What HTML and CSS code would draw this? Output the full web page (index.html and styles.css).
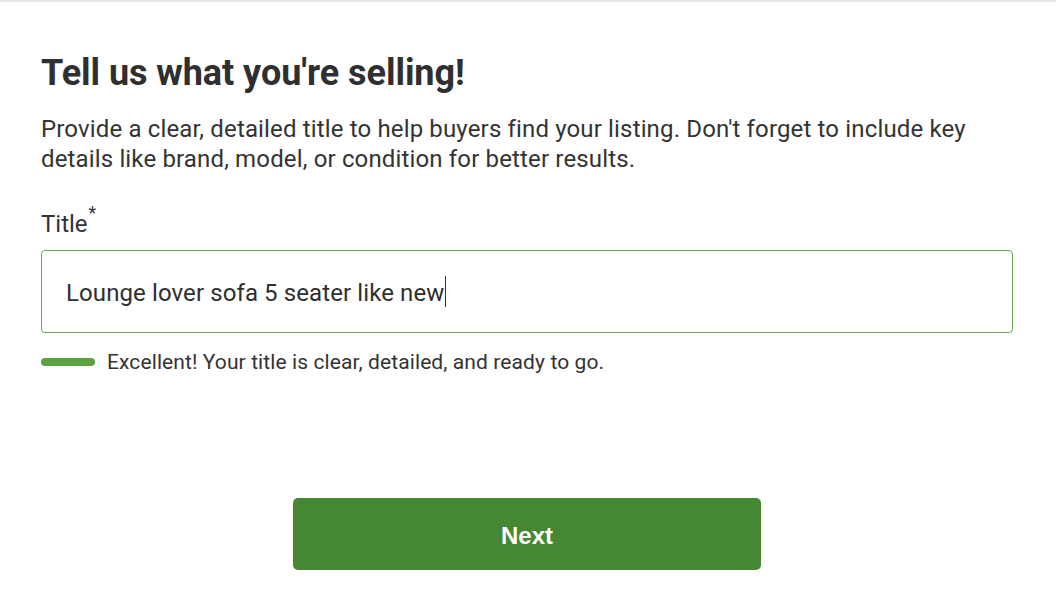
FILE: index.html
```html
<!DOCTYPE html>
<html lang="en">
<head>
<meta charset="utf-8">
<title>Tell us what you're selling</title>
<link rel="stylesheet" href="styles.css">
</head>
<body>
<div class="topline"></div>
<main class="page">
  <h1 class="heading">Tell us what you're selling!</h1>
  <p class="intro">Provide a clear, detailed title to help buyers find your listing. Don't forget to include key details like brand, model, or condition for better results.</p>
  <label class="label">Title<sup class="req">*</sup></label>
  <div class="input">
    <span class="value">Lounge lover sofa 5 seater like new</span><span class="caret"></span>
  </div>
  <div class="feedback">
    <span class="bar"></span>
    <span class="msg">Excellent! Your title is clear, detailed, and ready to go.</span>
  </div>
  <div class="actions">
    <button class="next">Next</button>
  </div>
</main>
</body>
</html>
```

FILE: styles.css
```css
* { box-sizing: border-box; }
html, body { margin: 0; padding: 0; background: #fff; }
body {
  font-family: Roboto, "Liberation Sans", sans-serif;
  color: #333;
  width: 1056px;
  height: 601px;
  overflow: hidden;
}
.topline {
  height: 2px;
  background: #e6e6e6;
}
.page {
  padding: 0 43px 0 41px;
  display: flex;
  flex-direction: column;
}
.heading {
  margin: 49px 0 0;
  font-size: 36px;
  font-weight: 700;
  line-height: 44px;
  color: #2f2f2f;
  letter-spacing: -0.05px;
}
.intro {
  margin: 19px 0 0;
  font-size: 24px;
  line-height: 30px;
  color: #333;
  letter-spacing: 0.15px;
}
.label {
  margin-top: 36px;
  font-size: 24px;
  line-height: 28px;
  color: #333;
}
.req {
  font-size: 18px;
  line-height: 0;
  vertical-align: 13px;
  margin-left: 1px;
}
.input {
  margin-top: 12px;
  height: 83px;
  border: 1px solid #6aa84f;
  border-radius: 4px;
  padding: 3px 24px 0;
  display: flex;
  align-items: center;
  font-size: 24px;
  color: #2f2f2f;
  letter-spacing: 0.1px;
}
.caret {
  display: inline-block;
  width: 1px;
  height: 31px;
  background: #333;
  margin-left: 1px;
  margin-top: -4px;
}
.feedback {
  margin-top: 17px;
  display: flex;
  align-items: center;
  gap: 12px;
}
.bar {
  width: 54px;
  height: 8px;
  border-radius: 4px;
  background: #5aa340;
}
.msg {
  font-size: 21px;
  color: #333;
  letter-spacing: 0.1px;
}
.actions {
  margin-top: 124px;
  display: flex;
  justify-content: center;
}
.next {
  width: 468px;
  height: 72px;
  border: none;
  border-radius: 5px;
  background: #468733;
  color: #fff;
  font-family: "Liberation Sans", Arial, sans-serif;
  font-weight: 700;
  font-size: 24px;
  padding-top: 4px;
  cursor: pointer;
}
```
